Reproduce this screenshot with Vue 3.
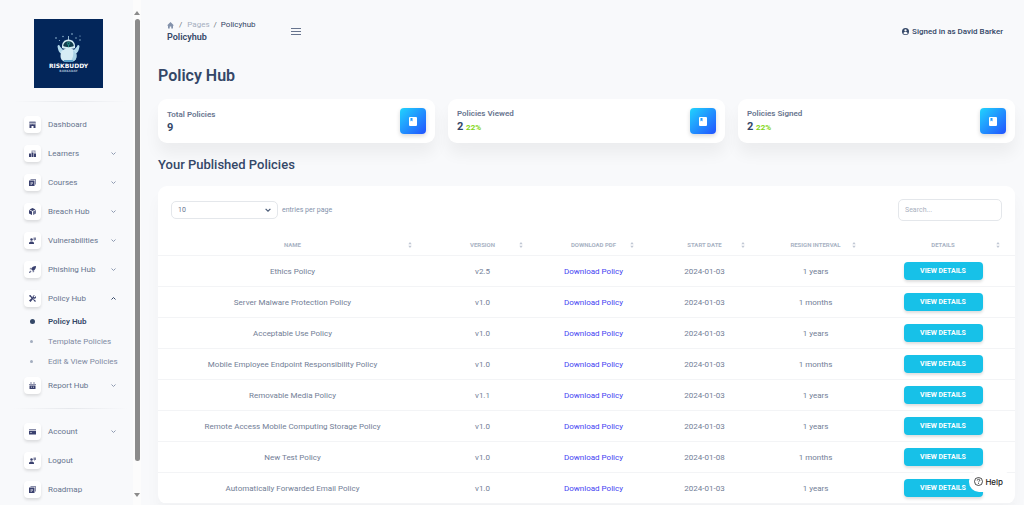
<script setup>
import { ref } from 'vue'

const mainNav = [
  { label: 'Dashboard', icon: 'shop' },
  { label: 'Learners', icon: 'office', sub: true },
  { label: 'Courses', icon: 'document', sub: true },
  { label: 'Breach Hub', icon: 'box', sub: true },
  { label: 'Vulnerabilities', icon: 'support', sub: true },
  { label: 'Phishing Hub', icon: 'rocket', sub: true },
  {
    label: 'Policy Hub', icon: 'tools', sub: true, open: true,
    children: ['Policy Hub', 'Template Policies', 'Edit & View Policies']
  },
  { label: 'Report Hub', icon: 'basket', sub: true }
]
const accountNav = [
  { label: 'Account', icon: 'card', sub: true },
  { label: 'Logout', icon: 'support' },
  { label: 'Roadmap', icon: 'document' }
]
const groups = [mainNav, accountNav]

const stats = [
  { title: 'Total Policies', value: '9' },
  { title: 'Policies Viewed', value: '2', percent: '22%' },
  { title: 'Policies Signed', value: '2', percent: '22%' }
]

const columns = ['Name', 'Version', 'Download PDF', 'Start Date', 'Resign Interval', 'Details']
const policies = [
  ['Ethics Policy', 'v2.5', '2024-01-03', '1 years'],
  ['Server Malware Protection Policy', 'v1.0', '2024-01-03', '1 months'],
  ['Acceptable Use Policy', 'v1.0', '2024-01-03', '1 years'],
  ['Mobile Employee Endpoint Responsibility Policy', 'v1.0', '2024-01-03', '1 months'],
  ['Removable Media Policy', 'v1.1', '2024-01-03', '1 years'],
  ['Remote Access Mobile Computing Storage Policy', 'v1.0', '2024-01-03', '1 years'],
  ['New Test Policy', 'v1.0', '2024-01-08', '1 months'],
  ['Automatically Forwarded Email Policy', 'v1.0', '2024-01-03', '1 years']
]
const perPage = ref('10')
const search = ref('')
</script>

<template>
  <div class="shell">
    <aside class="sidebar">
      <div class="side-content">
        <a href="#" class="logo" aria-label="RiskBuddy home">
          <svg viewBox="0 0 69 69">
            <rect width="69" height="69" fill="#03265a" />
            <g fill="#9fc4dc">
              <circle cx="22" cy="19" r=".8" /><circle cx="25.500" cy="21.500" r=".6" />
              <circle cx="29" cy="17.500" r=".7" /><circle cx="38" cy="15" r=".8" />
              <circle cx="42" cy="19" r=".7" /><circle cx="46" cy="17" r=".6" />
              <circle cx="46" cy="21" r=".7" />
            </g>
            <path d="M34.500 17v4" stroke="#b9dcec" stroke-width=".8" />
            <path d="M23.500 27c1-1.500 2-1 2.500.5l3.500 4-1.500 3.500c-3-1-4-4-4.500-8zM45.500 27c-1-1.500-2-1-2.500.5l-3.500 4 1.500 3.500c3-1 4-4 4.500-8z" fill="#b4dbed" />
            <path d="M26.500 37c0-5 2.500-7.500 8-7.500s8 2.500 8 7.500c0 3-1.500 5-4 5.500h-8c-2.500-.5-4-2.500-4-5.500z" fill="#d6edf6" />
            <path d="M39 31c2.500 1.500 3.500 3.500 3.500 6 0 3-1.500 5-4 5.500h-2c2.500-3 3.500-7 2.500-11.500z" fill="#a9d2e5" />
            <path d="M28 29c-.5-5 2-8.500 6.500-8.500s7 3.500 6.500 8.500c-3 1.500-10 1.500-13 0z" fill="#d5edf5" />
            <path d="M29.200 27c.2-3 2.300-4.800 5.300-4.800s5.100 1.800 5.300 4.800c-2.500 1.500-8 1.500-10.600 0z" fill="#113c4d" />
            <circle cx="34.500" cy="24.500" r="1.200" fill="none" stroke="#29a69b" stroke-width=".8" />
            <path d="M34.500 26v2" stroke="#29a69b" stroke-width=".8" />
            <path d="M30 41h9l.5 2h-10z" fill="#5b9fc6" />
            <text x="34.500" y="49" class="logo-name">RISKBUDDY</text>
            <text x="34.500" y="53" class="logo-sub">BARKADAY</text>
          </svg>
        </a>
        <nav v-for="(group, g) in groups" :key="g" class="group">
          <hr />
          <ul>
            <li v-for="item in group" :key="item.label">
              <a href="#" class="nav-link">
                <span class="nav-icon">
                  <svg viewBox="0 0 14 14" fill="#3a416f">
                    <template v-if="item.icon === 'shop'">
                      <path d="M1 1h12l1 4H0z" opacity=".7" />
                      <path d="M1 6q2 1.500 3 0 1.500 1.500 3 0 1.500 1.500 3 0 1 1.500 3 0v8H9v-4H5v4H1z" />
                    </template>
                    <template v-else-if="item.icon === 'office'">
                      <path d="M5 5V1h8v6h-2V3H7v2z" opacity=".55" />
                      <path d="M0 7h4v7H0zM5 5h4v9H5zM10 7h4v7h-4z" />
                    </template>
                    <template v-else-if="item.icon === 'document'">
                      <path d="M3 0h11v11h-2V2H3z" opacity=".6" />
                      <path d="M0 3h11v11H0zM3 6v1h5V6zM3 8v1h5V8zM3 10v1h3v-1z" fill-rule="evenodd" />
                    </template>
                    <template v-else-if="item.icon === 'box'">
                      <path d="M7 0l6 3-6 3-6-3z" />
                      <path d="M0 4l6 3v7l-6-3z" /><path d="M14 4L8 7v7l6-3z" opacity=".75" />
                    </template>
                    <template v-else-if="item.icon === 'support'">
                      <circle cx="5" cy="5" r="2.500" />
                      <path d="M0 14v-2c1-4 9-4 10 0v2z" />
                      <path d="M9 1h5v5h-2l-2 2V6H9z" opacity=".65" />
                    </template>
                    <template v-else-if="item.icon === 'rocket'">
                      <path d="M14 0C9 0 6 2 4 6l4 4c4-2 6-5 6-10zM4 3L1 6l2 1zM11 10l-3 3-1-2z" />
                      <path d="M3 9l2 2-3 3H0v-2z" opacity=".7" />
                    </template>
                    <template v-else-if="item.icon === 'tools'">
                      <path d="M0 1l3-1 3 4 2 2-2 2-3-4-2-1z" />
                      <path d="M9 8l5 4-2 2-4-5z" />
                      <path d="M12 0L9 3l2 2 3-3c1 4-2 6-5 5l-6 7-3-3 7-6C7 2 9 0 12 0z" />
                    </template>
                    <template v-else-if="item.icon === 'basket'">
                      <path d="M3 0h2v4H3zM9 0h2v4H9zM0 4h14v2H0z" opacity=".6" />
                      <path d="M1 7h12v7H1zM4 9v3h1V9zM9 9v3h1V9z" fill-rule="evenodd" />
                    </template>
                    <template v-else>
                      <path d="M0 2h14v3H0z" opacity=".6" />
                      <path d="M0 6h14v7H0zM2 9v1h4V9z" fill-rule="evenodd" />
                    </template>
                  </svg>
                </span>
                <span class="nav-label">{{ item.label }}</span>
                <svg v-if="item.sub" class="chevron" :class="{ open: item.open }" viewBox="0 0 10 10">
                  <path d="M1 3l4 4 4-4" />
                </svg>
              </a>
              <ul v-if="item.children">
                <li v-for="(child, c) in item.children" :key="child">
                  <a href="#" class="sub-link" :class="{ active: c === 0 }">
                    <span class="bullet"></span>{{ child }}
                  </a>
                </li>
              </ul>
            </li>
          </ul>
        </nav>
      </div>
      <div class="scrollbar" aria-hidden="true">
        <span class="arrow up"></span>
        <div class="track"><div class="thumb"></div></div>
        <span class="arrow down"></span>
      </div>
    </aside>

    <main>
      <header class="topbar">
        <div class="crumb-block">
          <nav class="crumbs" aria-label="Breadcrumb">
            <a href="#" aria-label="Home">
              <svg class="home" viewBox="0 0 14 14" fill="#8392ab"><path d="M7 0l7 7h-2v6H8.500V9h-3v4H2V7H0z" /></svg>
            </a>
            <span class="slash">/</span><a href="#" class="faded">Pages</a>
            <span class="slash">/</span><span>Policyhub</span>
          </nav>
          <div class="crumb-title">Policyhub</div>
        </div>
        <button class="burger" aria-label="Toggle menu"><i></i><i></i><i></i></button>
        <a href="#" class="user">
          <svg viewBox="0 0 16 16">
            <circle cx="8" cy="8" r="8" fill="#344767" />
            <circle cx="8" cy="5.500" r="2.600" fill="#fff" /><path d="M3 12c1-4 9-4 10 0-2 3-8 3-10 0z" fill="#fff" />
          </svg>
          Signed in as David Barker
        </a>
      </header>

      <h1>Policy Hub</h1>
      <section class="stats">
        <article v-for="s in stats" :key="s.title" class="stat">
          <div>
            <p>{{ s.title }}</p>
            <strong>{{ s.value }} <small v-if="s.percent">{{ s.percent }}</small></strong>
          </div>
          <span class="stat-icon">
            <svg viewBox="0 0 16 18"><path d="M2 0h12q2 0 2 2v14q0 2-2 2H2q-2 0-2-2V2q0-2 2-2zM3 2v7l2-2 2 2V2z" fill="#fff" fill-rule="evenodd" /></svg>
          </span>
        </article>
      </section>

      <h2>Your Published Policies</h2>
      <section class="panel">
        <div class="toolbar">
          <label class="per-page">
            <span class="select-wrap">
              <select v-model="perPage"><option>10</option><option>25</option></select>
              <svg viewBox="0 0 10 10"><path d="M1 3l4 4 4-4" /></svg>
            </span>
            entries per page
          </label>
          <input v-model="search" type="search" placeholder="Search..." aria-label="Search policies" />
        </div>
        <table>
          <colgroup>
            <col /><col class="c-mid" /><col class="c-mid" /><col class="c-mid" /><col class="c-mid" /><col class="c-last" />
          </colgroup>
          <thead>
            <tr>
              <th v-for="c in columns" :key="c" scope="col">
                <div class="head">
                  <span>{{ c }}</span>
                  <svg viewBox="0 0 8 14"><path d="M0 5l4-5 4 5zM0 9l4 5 4-5z" /></svg>
                </div>
              </th>
            </tr>
          </thead>
          <tbody>
            <tr v-for="p in policies" :key="p[0]">
              <td>{{ p[0] }}</td>
              <td>{{ p[1] }}</td>
              <td><a href="#" class="download">Download Policy</a></td>
              <td>{{ p[2] }}</td>
              <td>{{ p[3] }}</td>
              <td><button class="details">View Details</button></td>
            </tr>
          </tbody>
        </table>
      </section>
    </main>

    <button class="help">
      <svg viewBox="0 0 18 18" fill="none" stroke="#222" stroke-width="1.600">
        <circle cx="9" cy="9" r="8" /><path d="M6.500 7q0-2.500 2.500-2.500T11.500 7q0 1-1.300 1.700T9 10.500M9 12v1.800" />
      </svg>
      Help
    </button>
  </div>
</template>

<style>
body {
  margin: 0;
  background: #f8f9fb;
}
</style>

<style scoped>
* {
  box-sizing: border-box;
}
.shell {
  display: flex;
  height: 100vh;
  overflow: hidden;
  background: #f8f9fb;
  font-family: Roboto, "Liberation Sans", sans-serif;
  font-size: 8px;
  color: #67748e;
}
a {
  color: inherit;
  text-decoration: none;
}
ul {
  list-style: none;
  margin: 0;
  padding: 0;
}
button {
  border: 0;
  font-family: inherit;
  cursor: pointer;
}
.sidebar {
  display: flex;
  flex: 0 0 141px;
}
.side-content {
  flex: 1;
  overflow: hidden;
  padding-top: 19px;
}
.logo {
  display: block;
  width: 69px;
  margin: 0 auto 13px 34px;
}
.logo svg {
  display: block;
}
.logo-name {
  font: 700 6px "DejaVu Sans", sans-serif;
  fill: #fff;
  text-anchor: middle;
}
.logo-sub {
  font: 700 3px "DejaVu Sans", sans-serif;
  fill: #9db4cc;
  text-anchor: middle;
}
hr {
  height: 1px;
  margin: 0 5px 8px 14px;
  border: 0;
  background: linear-gradient(90deg, transparent, #e6e8ec, transparent);
}
.group + .group {
  margin-top: 8px;
}
.nav-link {
  display: flex;
  align-items: center;
  height: 29px;
  padding: 0 17px 0 24px;
}
.nav-icon {
  display: flex;
  align-items: center;
  justify-content: center;
  width: 17px;
  height: 17px;
  margin-right: 7px;
  border-radius: 4px;
  background: #fff;
  box-shadow: 0 2px 3px rgba(20, 20, 20, .12);
}
.nav-icon svg {
  width: 7px;
  height: 7px;
}
.nav-label {
  flex: 1;
}
.chevron {
  width: 5px;
  height: 5px;
  fill: none;
  stroke: #8f9bb1;
  stroke-width: 2;
}
.chevron.open {
  transform: rotate(180deg);
  stroke: #344767;
}
.sub-link {
  display: flex;
  align-items: center;
  height: 20px;
  padding-left: 24px;
  color: #7f8ba2;
}
.nav-link + ul {
  margin: -2px 0 0;
}
.bullet {
  width: 3px;
  height: 3px;
  margin: 0 15px 0 6px;
  border-radius: 50%;
  background: #a3adbf;
}
.active {
  color: #344767;
  font-weight: 600;
}
.active .bullet {
  width: 5px;
  height: 5px;
  margin: 0 13px 0 6px;
  background: #344767;
}
.scrollbar {
  display: flex;
  flex-direction: column;
  align-items: center;
  width: 8px;
  padding: 11px 0 8px;
  background: #fcfcfc;
}
.arrow {
  border: solid transparent;
  border-width: 0 3px;
}
.up {
  border-bottom: 4px solid #8b8b8b;
}
.down {
  border-top: 4px solid #8b8b8b;
}
.track {
  flex: 1;
  width: 5px;
  padding: 4px 0;
}
.thumb {
  height: 94%;
  border-radius: 3px;
  background: #8b8b8b;
}
main {
  flex: 1;
  min-width: 0;
  overflow: auto;
  scrollbar-width: none;
  padding: 19px 9px 0 17px;
}
.topbar {
  display: flex;
  align-items: center;
  padding: 0 12px 0 9px;
  color: #344767;
}
.crumb-block {
  width: 124px;
}
.crumbs {
  display: flex;
  align-items: center;
  line-height: 12px;
}
.home {
  display: block;
  width: 7px;
  height: 7px;
}
.slash {
  margin: 0 5px;
  color: #6c757d;
}
.slash + a + .slash {
  margin: 0 4px;
}
.faded {
  color: #a5afc0;
}
.crumb-title {
  line-height: 13px;
  font-size: 9px;
  font-weight: 600;
}
.burger {
  display: grid;
  gap: 2px;
  width: 10px;
  padding: 0;
  background: none;
}
.burger i {
  height: 1px;
  background: #67748e;
}
.user {
  display: flex;
  align-items: center;
  gap: 3px;
  margin-left: auto;
  font-weight: 500;
}
.user svg {
  width: 7px;
  height: 7px;
}
h1 {
  margin: 22px 0 13px;
  font-size: 16px;
  line-height: 20px;
  font-weight: 600;
  color: #344767;
}
.stats {
  display: grid;
  grid-template-columns: repeat(3, 1fr);
  gap: 13px;
}
.stat {
  display: flex;
  align-items: center;
  justify-content: space-between;
  height: 44px;
  padding: 0 9px;
  border-radius: 9px;
  background: #fff;
  box-shadow: 0 11px 15px rgba(0, 0, 0, .05);
}
.stat p {
  margin: 0;
  line-height: 13px;
  font-weight: 600;
}
.stat strong {
  display: block;
  font-size: 11px;
  line-height: 14px;
  color: #344767;
}
.stat small {
  font-size: 8px;
  color: #82d616;
}
.stat-icon {
  display: flex;
  align-items: center;
  justify-content: center;
  width: 26px;
  height: 26px;
  border-radius: 4px;
  background: linear-gradient(135deg, #21d4fd, #2152ff);
  box-shadow: 0 2px 4px rgba(20, 20, 20, .16);
}
.stat-icon svg {
  width: 8px;
  height: 9px;
}
h2 {
  margin: 14px 0 13px;
  font-size: 13px;
  line-height: 16px;
  font-weight: 500;
  color: #344767;
}
.panel {
  padding-top: 13px;
  border-radius: 9px;
  background: #fff;
  box-shadow: 0 11px 15px rgba(0, 0, 0, .03);
}
.toolbar {
  display: flex;
  align-items: center;
  justify-content: space-between;
  margin-bottom: 13px;
  padding: 0 13px;
}
.per-page {
  display: flex;
  align-items: center;
  gap: 4px;
  font-size: 7px;
  color: #8392ab;
}
.select-wrap {
  display: flex;
  position: relative;
}
.select-wrap svg {
  position: absolute;
  top: 6px;
  right: 7px;
  width: 6px;
  height: 6px;
  fill: none;
  stroke: #495a76;
  stroke-width: 2;
  pointer-events: none;
}
select,
input {
  border: 1px solid #e4e7eb;
  border-radius: 5px;
  background: #fff;
  font: 7px Roboto, sans-serif;
  color: #67748e;
  appearance: none;
  outline: none;
}
select {
  width: 107px;
  height: 18px;
  padding: 0 6px;
}
input {
  width: 104px;
  height: 22px;
  padding: 0 6px;
}
input::placeholder {
  color: #a9b1c0;
}
table {
  width: 100%;
  table-layout: fixed;
  border-collapse: separate;
  border-spacing: 0;
}
.c-mid {
  width: 111px;
}
.c-last {
  width: 144px;
}
th,
td {
  padding: 0;
  border-bottom: 1px solid #f3f4f6;
  text-align: center;
}
th {
  height: 22px;
  font-size: 6px;
  font-weight: 700;
  text-transform: uppercase;
  color: #a9b3c4;
}
.head {
  display: grid;
  grid-template-columns: 1fr auto 1fr;
  align-items: center;
  padding: 0 15px;
}
.head span {
  grid-column: 2;
  white-space: nowrap;
}
.head svg {
  justify-self: end;
  width: 4px;
  height: 6px;
  fill: #c1c8d4;
}
td {
  height: 31px;
  color: #727e96;
}
.download {
  color: #453ff2;
}
.details {
  display: block;
  width: 79px;
  height: 18px;
  margin: 0 auto;
  padding: 0;
  border-radius: 4px;
  background: #17c1e8;
  box-shadow: 0 2px 3px rgba(20, 20, 20, .14);
  font-size: 7px;
  font-weight: 700;
  text-transform: uppercase;
  color: #fff;
}
.help {
  display: flex;
  align-items: center;
  gap: 2px;
  position: fixed;
  right: 12px;
  bottom: 13px;
  height: 21px;
  padding: 0 9px 0 5px;
  border-radius: 10px;
  background: #fff;
  font: 500 8px Inter, sans-serif;
  color: #222;
}
.help svg {
  width: 9px;
  height: 9px;
}
</style>
